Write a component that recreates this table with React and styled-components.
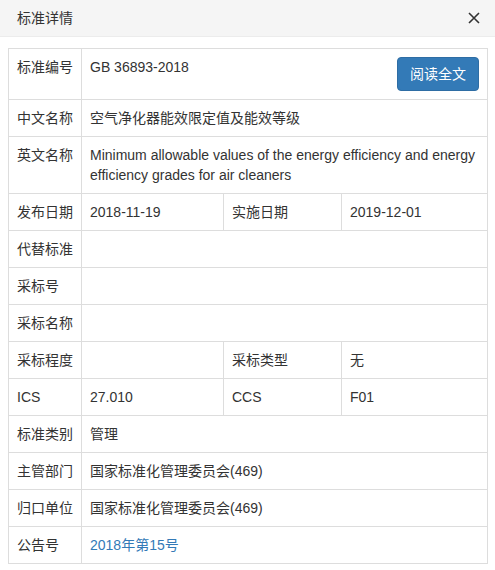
import React from "react";
import styled, { createGlobalStyle } from "styled-components";

const Global = createGlobalStyle`
    html, body {
        margin: 0;
        padding: 0;
        background: #fff;
    }
    body {
        font-family: "Liberation Sans", "Noto Sans CJK SC", sans-serif;
        font-size: 14px;
        color: #333;
    }
`;

const Modal = styled.div`
    width: 495px;
    height: 570px;
    background: #fff;
    box-sizing: border-box;
`;

const Header = styled.div`
    height: 37px;
    background: #f5f5f5;
    border-bottom: 1px solid #ececec;
    box-sizing: border-box;
    display: flex;
    align-items: center;
    justify-content: space-between;
    padding: 0 14px 0 17px;
`;

const Title = styled.h4`
    margin: 0;
    font-size: 14px;
    font-weight: normal;
    line-height: 20px;
    color: #333;
`;

const Close = styled.button`
    border: 0;
    background: none;
    padding: 0;
    width: 14px;
    height: 14px;
    display: flex;
    align-items: center;
    justify-content: center;
    cursor: pointer;
`;

const Body = styled.div`
    padding: 11px 8px 0 8px;
`;

const Table = styled.table`
    width: 479px;
    border-collapse: collapse;
    table-layout: fixed;
`;

const Cell = styled.td`
    border: 1px solid #ddd;
    padding: 8px;
    line-height: 20px;
    vertical-align: top;
    font-size: 14px;
    color: #333;
    word-wrap: break-word;
`;

const Label = styled(Cell)`
    white-space: nowrap;
`;

const ReadButton = styled.a`
    float: right;
    display: inline-block;
    padding: 6px 12px;
    font-size: 14px;
    line-height: 20px;
    color: #fff;
    background: #337ab7;
    border: 1px solid #2e6da4;
    border-radius: 4px;
    text-decoration: none;
`;

const Link = styled.a`
    color: #337ab7;
    text-decoration: none;
`;

const CloseIcon = () => (
    <svg width="12" height="12" viewBox="0 0 12 12">
        <path d="M1 1 L11 11 M11 1 L1 11" stroke="#333" strokeWidth="1.6" />
    </svg>
);

const single = [
    ["中文名称", "空气净化器能效限定值及能效等级"],
    ["英文名称", "Minimum allowable values of the energy efficiency and energy efficiency grades for air cleaners"],
];

const App = () => {
    return (
        <Modal>
            <Global />
            <Header>
                <Title>标准详情</Title>
                <Close aria-label="close"><CloseIcon /></Close>
            </Header>
            <Body>
                <Table>
                    <colgroup>
                        <col style={{ width: 73 }} />
                        <col style={{ width: 142 }} />
                        <col style={{ width: 118 }} />
                        <col style={{ width: 146 }} />
                    </colgroup>
                    <tbody>
                        <tr>
                            <Label>标准编号</Label>
                            <Cell colSpan={3}>
                                <ReadButton href="#">阅读全文</ReadButton>
                                GB 36893-2018
                            </Cell>
                        </tr>
                        {single.map(([k, v]) => (
                            <tr key={k}>
                                <Label>{k}</Label>
                                <Cell colSpan={3}>{v}</Cell>
                            </tr>
                        ))}
                        <tr>
                            <Label>发布日期</Label>
                            <Cell>2018-11-19</Cell>
                            <Label>实施日期</Label>
                            <Cell>2019-12-01</Cell>
                        </tr>
                        <tr>
                            <Label>代替标准</Label>
                            <Cell colSpan={3}></Cell>
                        </tr>
                        <tr>
                            <Label>采标号</Label>
                            <Cell colSpan={3}></Cell>
                        </tr>
                        <tr>
                            <Label>采标名称</Label>
                            <Cell colSpan={3}></Cell>
                        </tr>
                        <tr>
                            <Label>采标程度</Label>
                            <Cell></Cell>
                            <Label>采标类型</Label>
                            <Cell>无</Cell>
                        </tr>
                        <tr>
                            <Label>ICS</Label>
                            <Cell>27.010</Cell>
                            <Label>CCS</Label>
                            <Cell>F01</Cell>
                        </tr>
                        <tr>
                            <Label>标准类别</Label>
                            <Cell colSpan={3}>管理</Cell>
                        </tr>
                        <tr>
                            <Label>主管部门</Label>
                            <Cell colSpan={3}>国家标准化管理委员会(469)</Cell>
                        </tr>
                        <tr>
                            <Label>归口单位</Label>
                            <Cell colSpan={3}>国家标准化管理委员会(469)</Cell>
                        </tr>
                        <tr>
                            <Label>公告号</Label>
                            <Cell colSpan={3}><Link href="#">2018年第15号</Link></Cell>
                        </tr>
                    </tbody>
                </Table>
            </Body>
        </Modal>
    );
};

export default App;
